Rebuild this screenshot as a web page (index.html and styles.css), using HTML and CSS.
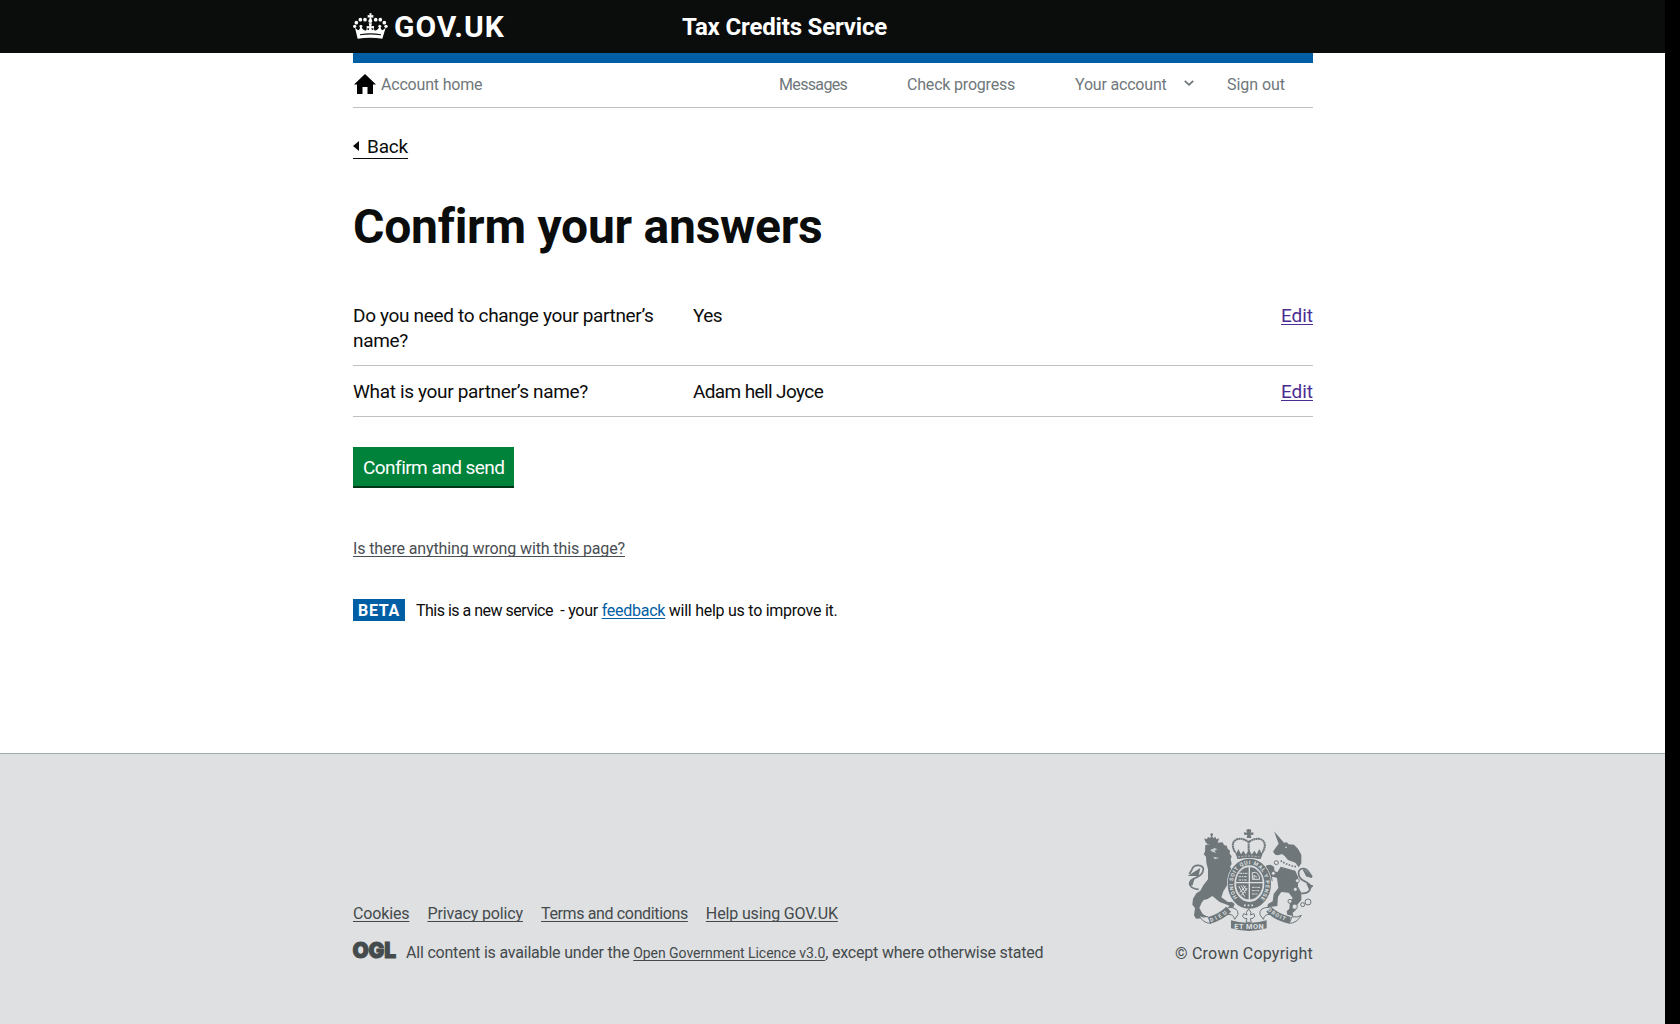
FILE: index.html
```html
<!DOCTYPE html>
<html lang="en">
<head>
<meta charset="utf-8">
<title>Confirm your answers</title>
<link rel="stylesheet" href="styles.css">
</head>
<body>
<div class="page">
  <header class="masthead">
    <div class="container masthead-inner">
      <a class="logo" href="#">
        <svg class="crown" viewBox="39 38 105 78" width="35" height="26" fill="#fff">
          <path d="M45 82l9 8 5-3 1-6-3-4 6-4 5 4-3 5 6 7 7 2 2-5 6 4 2-7-8 2v-8l8 1-2-9h10l-2 9 8-1v8l-8-2 2 7 6-4 2 5 7-2 6-7-3-5 5-4 6 4-3 4 1 6 5 3 9-8-10 33q-36-5-74 0z"/>
          <path d="M60 102q31-6 63 0v3q-32-5-63 0z" fill="#0b0c0c"/>
          <circle cx="44" cy="78" r="5"/><circle cx="49" cy="67" r="5.500"/><circle cx="61" cy="58" r="5.500"/><circle cx="75" cy="58" r="5.500"/><circle cx="91" cy="62" r="6"/><circle cx="107" cy="58" r="5.500"/><circle cx="121" cy="58" r="5.500"/><circle cx="133" cy="67" r="5.500"/><circle cx="138" cy="78" r="5"/>
          <path d="M88 39h7l-1 6 6-1v8l-6-1 1 7h-7l1-7-6 1v-8l6 1z"/>
        </svg>
        <span class="logo-text">GOV.UK</span>
      </a>
      <a class="service-name" href="#">Tax Credits Service</a>
    </div>
  </header>
  <div class="container">
    <nav class="account-nav">
      <a class="home" href="#">
        <svg viewBox="0 0 22 20" width="22" height="20"><path d="M11 0l11 10.500h-3V20h-5.500v-7h-5v7H3v-9.500H0z" fill="#000"/></svg>
        <span>Account home</span>
      </a>
      <a class="nav-messages" href="#">Messages</a>
      <a class="nav-progress" href="#">Check progress</a>
      <a class="nav-account" href="#"><span>Your account</span><svg viewBox="0 0 10 6" width="10" height="6"><path d="M.8.8L5 4.800 9.200.8" fill="none" stroke="#6f777b" stroke-width="1.800"/></svg></a>
      <a class="nav-signout" href="#">Sign out</a>
    </nav>
    <main>
      <a class="back" href="#"><svg viewBox="0 0 6 10" width="6" height="10"><path d="M6 0v10L0 5z" fill="#0b0c0c"/></svg><span>Back</span></a>
      <h1>Confirm your answers</h1>
      <dl class="answers">
        <div class="answer">
          <dt>Do you need to change your partner’s name?</dt>
          <dd class="value">Yes</dd>
          <dd class="change"><a href="#">Edit</a></dd>
        </div>
        <div class="answer">
          <dt>What is your partner’s name?</dt>
          <dd class="value">Adam hell Joyce</dd>
          <dd class="change"><a href="#">Edit</a></dd>
        </div>
      </dl>
      <button class="button" type="button">Confirm and send</button>
      <div class="report"><a href="#">Is there anything wrong with this page?</a></div>
      <div class="phase"><strong class="tag">BETA</strong><span class="phase-text"><span class="phase-lead">This is a new service</span>&nbsp; - your <a href="#">feedback</a> will help us to improve it.</span></div>
    </main>
  </div>
  <footer class="footer">
    <div class="container footer-inner">
      <div class="footer-meta">
        <div class="footer-links">
          <a href="#">Cookies</a><a href="#">Privacy policy</a><a class="terms" href="#">Terms and conditions</a><a href="#">Help using GOV.UK</a>
        </div>
        <div class="licence">
          <svg class="ogl" viewBox="0 0 43 18" width="43" height="18"><text x="-0.500" y="16" textLength="43.500" lengthAdjust="spacingAndGlyphs">OGL</text></svg>
          <span class="licence-text">All content is available under the <a href="#">Open Government Licence v3.0</a>, except where otherwise stated</span>
        </div>
      </div>
      <div class="copyright">
        <svg class="arms" viewBox="84 57 375 306" width="125" height="102">
          <g fill="#6f777b">
            <path d="M136 95l-3-10 8 3 3-8 6 5 5-9 5 9 6-5 3 8 8-3-3 12-5 5h-27z"/>
            <circle cx="155" cy="74" r="4"/>
            <path d="M136 105l30-6 22-2 4 8 8 2 3 9 7 6-1 9 6 8-3 9 3 14-5 8 6 10-4 12 6 16-7 10-6-2-5 12-10 16-6 18 20 14 12 0 8 6-4 10 3 8-10-2-8-12-26-10-22-18-14 9-12 3-6 8-7 16 10 18 12 7-2 8-8-2-22 1-6-10 3-22-8-10 2-18 10-16 12-8 9-16 14-18 0-30-5-20-1-18-7-7 4-8z"/>
            <path d="M322 184l-8-10 6-8 12-2 10 6 2 14 14 4 8 10-20 4-10-2 2 14-12-6-8-8 8-6zM342 64l30 34 8-1 6 6 16 1 12 12 10 18 0 26-8 12-10-14-22-8-10-12-8-6-12 4-8-2-7-9 7-10 10-14z"/>
            <path d="M362 170l44 12 8 18 0 30 10 18 0 22-12 14-4 16-10 8 2 10-18-4-2-10 8-8 2-20 8-12-12-16-22-2-10 14-2 28-30 4 2-10 14-8 3-22 14-18-4-30-14-6-16 4-8-12 12-2 14 0 10 4z"/>
            <path d="M252 72q-2-4 2-5l7 1-2-9 7-2 8 2-2 9 8-1v8l-8-1 2 10h-14l2-10-8 1zM222 120l8 9 5-12 8 16 7-11 8 12 9-16 8 16 8-12 7 11 8-16 6 12 8-9-10 27q-34-8-69 0z"/>
          </g>
          <g fill="none" stroke="#6f777b">
            <path d="M225 126c-20-34 10-52 41-30 32-22 62-4 42 30M266 94v30" stroke-width="6" stroke-dasharray="6 1"/>
            <path d="M116 238c-26-2-36-20-18-30 16-8 32-14 32-30 0-14-28-18-34 0l-8 14" stroke-width="5"/>
            <path d="M90 196l28-18-4 18zM102 204l-6 20-8-2" stroke-width="4" fill="#6f777b"/>
            <path d="M424 250c26 2 36-20 18-32-16-8-28-14-26-32 4-14 22-14 30 0l10 14" stroke-width="5"/>
            <path d="M430 178l26 24-16-4zM440 222l18 6-12 8" stroke-width="4" fill="#6f777b"/>
            <circle cx="444" cy="276" r="9" stroke-width="3"/><circle cx="428" cy="284" r="6" stroke-width="3"/><circle cx="404" cy="290" r="8" stroke-width="3" fill="#dee0e2"/><circle cx="390" cy="274" r="6" stroke-width="3" fill="#dee0e2"/><circle cx="412" cy="212" r="6" stroke-width="3" fill="#dee0e2"/><circle cx="406" cy="238" r="6" stroke-width="3" fill="#dee0e2"/><circle cx="349" cy="158" r="6" stroke-width="3" fill="#dee0e2"/><circle cx="340" cy="190" r="6" stroke-width="3" fill="#dee0e2"/>
            <path d="M362 152q20 14 46 18" stroke="#dee0e2" stroke-width="9"/><path d="M362 152q20 14 46 18" stroke-width="5" stroke-dasharray="5 4"/>
          </g>
          <path d="M150 120l14-6 8 4-8 4 4 6-10-2zM160 140l18 4-14 4z" fill="#dee0e2" opacity=".8"/>
          <circle cx="378" cy="112" r="2.500" fill="#dee0e2"/>
          <ellipse cx="268" cy="221" rx="67" ry="77" fill="#dee0e2"/>
          <ellipse cx="268" cy="221" rx="55" ry="65" fill="none" stroke="#6f777b" stroke-width="20"/>
          <ellipse cx="268" cy="220" rx="41" ry="50" fill="#6f777b" stroke="#dee0e2" stroke-width="2"/>
          <path d="M268 170v100M226 218h84" stroke="#dee0e2" stroke-width="4"/>
          <g fill="none" stroke="#dee0e2" stroke-width="3">
            <path d="M238 190h24M236 200h26M236 210h26M276 232h26M276 242h22M276 252h18" stroke-dasharray="8 2 4 2"/>
            <path d="M277 188q20-6 22 20h-22zM282 208v-12l9 6"/>
            <path d="M236 228l18 32M243 226l14 24M250 226l10 16M257 228l-18 20M262 234l-18 22"/>
          </g>
          <path id="garter" d="M233 263A49 59 0 1 1 303 263" fill="none"/>
          <text class="motto"><textPath href="#garter" startOffset="0" textLength="262">HONI SOIT QUI MAL Y PENSE</textPath></text>
          <path d="M232 137q34-8 68 0v10q-34-6-68 0z" fill="#6f777b"/>
          <path d="M234 141q32-6 64 0" fill="none" stroke="#dee0e2" stroke-width="2" stroke-dasharray="6 4"/>
          <path d="M252 286h32" stroke="#dee0e2" stroke-width="5" stroke-dasharray="5 6"/>
          <path d="M266 297l7 10-2 8 10-4q8 8-2 14l-8 1 3 11h-16l3-11-8-1q-10-6-2-14l10 4-2-8z" fill="none" stroke="#6f777b" stroke-width="3"/>
          <g fill="#dee0e2" stroke="#6f777b" stroke-width="3" stroke-linejoin="round">
            <path d="M116 316q12 8 28 4l8 20q-22 0-36-24zM204 292q32 0 30 22l-10 14q-4-18-22-14z"/>
            <path d="M424 316q-12 8-28 4l-8 20q22 0 36-24zM328 292q-32 0-28 22l10 14q4-18 22-14z"/>
          </g>
          <path d="M148 331Q182 322 206 298M326 298Q350 322 390 331" fill="none" stroke="#6f777b" stroke-width="21"/>
          <path d="M213 331q53 16 107 0v24q-52 16-107 0z" fill="#6f777b"/>
          <path id="ribbon-left" d="M152 336Q184 326 211 302" fill="none"/>
          <path id="ribbon-right" d="M322 301Q348 326 392 337" fill="none"/>
          <text class="motto"><textPath href="#ribbon-left" textLength="56">DIEU</textPath></text>
          <text class="motto"><textPath href="#ribbon-right" textLength="62">DROIT</textPath></text>
          <text class="motto motto-large" x="223" y="358" textLength="88">ET MON</text>
        </svg>
        <a href="#">© Crown Copyright</a>
      </div>
    </div>
  </footer>
</div>
</body>
</html>
```
FILE: styles.css
```css
* { box-sizing: border-box; }
body { margin: 0; background: #000; color: #0b0c0c; font: 19px/25px Roboto, "Liberation Sans", sans-serif; }
a { color: inherit; text-decoration: none; }
.page { width: 1665px; height: 1024px; display: flex; flex-direction: column; background: #fff; }
.container { width: 960px; margin-left: 353px; }
.masthead { height: 53px; background: #0b0c0c; color: #fff; }
.masthead-inner { display: flex; }
.logo { width: 329px; display: flex; padding-top: 13px; gap: 6px; }
.logo-text { font-size: 30px; font-weight: 700; line-height: 28px; letter-spacing: 1px; }
.service-name { font-size: 24px; font-weight: 700; line-height: 55px; height: 53px; letter-spacing: -.17px; }
.account-nav { height: 55px; border-top: 10px solid #005ea5; border-bottom: 1px solid #bfc1c3; display: flex; font-size: 16px; line-height: 44px; color: #6f777b; letter-spacing: -.19px; }
.home { width: 426px; display: flex; align-items: center; gap: 5px; padding-left: 1px; }
.home svg { margin-bottom: 2px; }
.nav-messages { width: 128px; letter-spacing: -.65px; }
.nav-progress { width: 168px; }
.nav-account { width: 152px; display: flex; gap: 17px; }
.nav-account svg { margin-top: 17px; }
.nav-signout { letter-spacing: -.05px; }
.back { display: inline-flex; align-items: center; gap: 8px; height: 26px; margin-top: 25px; padding-top: 2px; border-bottom: 1px solid #0b0c0c; letter-spacing: -.2px; }
.back svg { margin-bottom: 2px; }
h1 { margin: 43px 0 0; font-size: 48px; line-height: 50px; letter-spacing: -.24px; }
.answers { margin: 38px 0 30px; letter-spacing: -.33px; }
.answer { display: flex; padding: 13px 0 12px; border-bottom: 1px solid #bfc1c3; }
.answer dt { width: 340px; padding-right: 25px; }
.answer dd { margin: 0; }
.answer .value { flex: 1; letter-spacing: -.62px; }
.answer .change { letter-spacing: -.05px; }
.change a, .report a, .phase a, .footer-meta a { text-decoration: underline; text-decoration-thickness: 1px; text-decoration-skip-ink: none; text-underline-offset: 2px; }
.change a { color: #4c2c92; }
.button { display: block; height: 39px; padding: 2px 10px 0; border: 0; background: #00823b; box-shadow: 0 2px 0 #003618; color: #fff; font: inherit; letter-spacing: -.54px; }
.report { margin-top: 50px; font-size: 16px; color: #494e52; letter-spacing: -.12px; }
.phase { display: flex; margin-top: 38px; font-size: 16px; line-height: 22px; letter-spacing: -.26px; }
.phase-lead { letter-spacing: -.5px; }
.tag { background: #005ea5; color: #fff; padding: 1px 5px 0; height: 22px; margin-right: 11px; letter-spacing: .7px; }
.phase-text { padding-top: 1px; }
.phase a { color: #005ea5; }
.footer { margin-top: auto; height: 271px; border-top: 1px solid #a1acb2; background: #dee0e2; color: #454a4c; font-size: 16px; line-height: 20px; }
.footer-inner { display: flex; justify-content: space-between; padding-top: 75px; }
.footer-meta { padding-top: 75px; }
.footer-links { display: flex; gap: 18px; letter-spacing: -.14px; }
.footer-links .terms { letter-spacing: -.36px; }
.licence { display: flex; gap: 10px; margin-top: 18px; letter-spacing: -.2px; }
.licence-text { padding-top: 1px; }
.licence a { font-size: 14px; letter-spacing: -.05px; }
.ogl { overflow: visible; font: 900 22px Inter, sans-serif; fill: #454a4c; stroke: #454a4c; stroke-width: 1px; }
.copyright { display: flex; flex-direction: column; align-items: flex-end; gap: 13px; letter-spacing: .2px; }
.motto { font: 700 16px Roboto, sans-serif; fill: #dee0e2; }
.motto-large { font-size: 22px; }
```
